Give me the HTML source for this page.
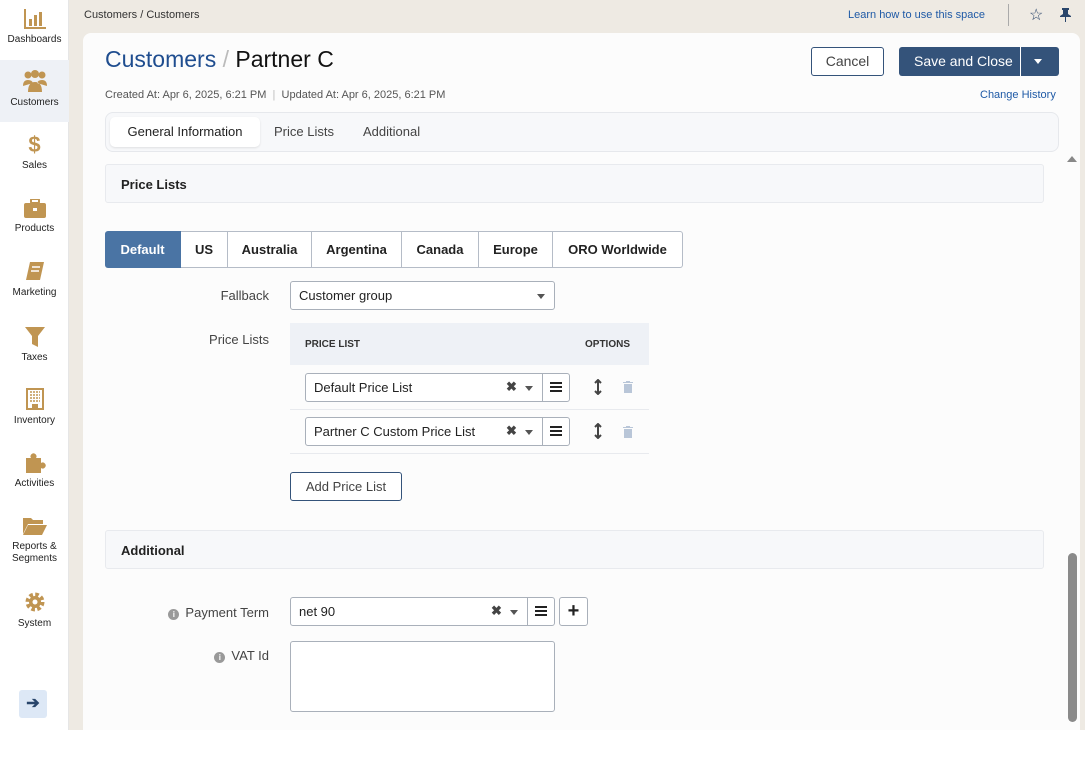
<!DOCTYPE html>
<html><head><meta charset="utf-8"><style>
*{box-sizing:border-box;margin:0;padding:0}
body{width:1085px;height:780px;background:#fff;font-family:"Liberation Sans",sans-serif;color:#222;position:relative;overflow:hidden;font-size:13px}
.side{position:absolute;left:0;top:0;width:69px;height:730px;background:#fff;border-right:1px solid #e6e6e6}
.nav{position:absolute;left:0;width:69px;text-align:center;font-size:10px;color:#222}
.nav svg{display:block;margin:0 auto 5px}
.top{position:absolute;left:69px;top:0;width:1016px;height:730px;background:#eeeae3}
.card{position:absolute;left:83px;top:33px;width:997px;height:697px;background:#fcfcfc;border-radius:8px 8px 0 0}
a{color:#1f5aa6}
.abs{position:absolute}
.sec{position:absolute;left:105px;width:939px;height:39px;background:#f7f8fa;border:1px solid #e8eaee;border-radius:3px;font-weight:bold;font-size:13px;padding:12px 15px}
.tab{position:absolute;top:231px;height:37px;border:1px solid #b5bcc7;border-left:none;font-weight:bold;font-size:13px;text-align:center;line-height:35px;background:#fff}
.inp{position:absolute;background:#fff;border:1px solid #a9b0ba;border-radius:3px;font-size:13px}
.lbl{position:absolute;font-size:13px;color:#444;text-align:right}
.hb{position:absolute;left:244px;top:8px;width:12px;height:2px;background:#222;box-shadow:0 4px 0 #222,0 8px 0 #222}
</style></head><body>
<div class="top"></div>
<div class="side">
 <div class="nav" style="top:9px"><svg width="22" height="20" viewBox="0 0 22 20"><path d="M1 0v19h21" stroke="#c09552" stroke-width="2" fill="none"/><rect x="5" y="10" width="3" height="7" fill="#c09552"/><rect x="10" y="6" width="3" height="11" fill="#c09552"/><rect x="15" y="3" width="3" height="14" fill="#c09552"/></svg>Dashboards</div>
 <div style="position:absolute;top:60px;left:0;width:69px;height:62px;background:#eef1f6"></div>
 <div class="nav" style="top:70px"><svg width="26" height="22" viewBox="0 0 26 22"><circle cx="6" cy="5" r="3.5" fill="#c09552"/><circle cx="20" cy="5" r="3.5" fill="#c09552"/><circle cx="13" cy="4" r="4" fill="#c09552"/><path d="M1 16q0-6 5-6 4 0 5 3M25 16q0-6-5-6-4 0-5 3M6 22q0-10 7-10t7 10z" fill="#c09552"/></svg>Customers</div>
 <div class="nav" style="top:134px"><div style="color:#c09552;font-size:22px;font-weight:bold;height:26px;line-height:22px">$</div>Sales</div>
 <div class="nav" style="top:199px"><svg width="22" height="19" viewBox="0 0 22 19"><rect x="7" y="0" width="8" height="4" rx="1" fill="none" stroke="#c09552" stroke-width="2"/><rect x="0" y="4" width="22" height="15" rx="2" fill="#c09552"/><rect x="9" y="9" width="4" height="3" fill="#fff"/></svg>Products</div>
 <div class="nav" style="top:262px"><svg width="20" height="20" viewBox="0 0 20 20"><path d="M5 0h14l-4 18H1z" fill="#c09552"/><path d="M7 5h8M6 9h8" stroke="#fff" stroke-width="1.5"/></svg>Marketing</div>
 <div class="nav" style="top:327px"><svg width="20" height="20" viewBox="0 0 20 20"><path d="M0 0h20l-7 9v11l-6-3V9z" fill="#c09552"/></svg>Taxes</div>
 <div class="nav" style="top:388px"><svg width="18" height="22" viewBox="0 0 18 22"><rect x="0" y="0" width="18" height="22" fill="#c09552"/><rect x="2" y="2" width="14" height="18" fill="#fff"/><path d="M4 4h10M4 7h10M4 10h10M4 13h10" stroke="#c09552" stroke-width="1.5" stroke-dasharray="2 1"/><rect x="6" y="16" width="6" height="4" fill="#c09552"/></svg>Inventory</div>
 <div class="nav" style="top:451px"><svg width="22" height="22" viewBox="0 0 22 22"><path d="M2 7h5a3 3 0 1 1 5 0h5v5a3 3 0 1 1 0 5v5H2z" fill="#c09552"/></svg>Activities</div>
 <div class="nav" style="top:516px;line-height:12px"><svg width="24" height="20" viewBox="0 0 24 20"><path d="M0 2h8l2 2h10v4H5L0 18z" fill="#c09552"/><path d="M5 9h19l-5 10H0z" fill="#c09552"/></svg>Reports &amp;<br>Segments</div>
 <div class="nav" style="top:591px"><svg width="22" height="22" viewBox="0 0 22 22"><circle cx="11" cy="11" r="7" fill="none" stroke="#c09552" stroke-width="5" stroke-dasharray="3.3 2.2"/><circle cx="11" cy="11" r="6" fill="#c09552"/><circle cx="11" cy="11" r="2.5" fill="#fff"/></svg>System</div>
 <div style="position:absolute;left:19px;top:690px;width:28px;height:28px;background:#dde8f6;border-radius:3px;text-align:center;line-height:27px;color:#29456b;font-weight:bold;font-size:16px">➔</div>
</div>
<div class="abs" style="left:84px;top:9px;font-size:11px;color:#333">Customers / Customers</div>
<div class="abs" style="left:848px;top:9px;font-size:11px"><a>Learn how to use this space</a></div>
<div class="abs" style="left:1008px;top:4px;width:1px;height:22px;background:#aaa"></div>
<div class="abs" style="left:1029px;top:5px;font-size:16px;color:#29456b">☆</div>
<svg class="abs" style="left:1060px;top:8px" width="11" height="14" viewBox="0 0 11 14"><path d="M2 0h7v2H8v4l3 2v1H0V8l3-2V2H2zM5 9h1v5H5z" fill="#29456b"/></svg>
<div class="card"></div>
<div class="abs" style="left:105px;top:46px;font-size:23px;color:#1f4d8f">Customers <span style="color:#bbb">/</span> <span style="color:#111">Partner C</span></div>
<div class="abs" style="left:105px;top:89px;font-size:11px;color:#555">Created At: Apr 6, 2025, 6:21 PM <span style="color:#bbb">&nbsp;|&nbsp;</span> Updated At: Apr 6, 2025, 6:21 PM</div>
<div class="abs" style="left:811px;top:47px;width:73px;height:29px;border:1px solid #34537a;border-radius:3px;background:#fff;text-align:center;line-height:27px;font-size:14px;color:#444">Cancel</div>
<div class="abs" style="left:899px;top:47px;width:160px;height:29px;background:#34537a;border-radius:3px;color:#fff;font-size:14px;line-height:29px;padding-left:15px">Save and Close<span style="position:absolute;left:121px;top:0;width:1px;height:29px;background:#fff"></span><span style="position:absolute;left:135px;top:12px;border:4px solid transparent;border-top:5px solid #fff"></span></div>
<div class="abs" style="left:980px;top:89px;font-size:11px;color:#1f5aa6">Change History</div>
<div class="abs" style="left:105px;top:112px;width:954px;height:40px;background:#f7f8fa;border:1px solid #e6e8ec;border-radius:8px"></div>
<div class="abs" style="left:110px;top:117px;width:150px;height:30px;background:#fff;border-radius:5px;box-shadow:0 1px 2px rgba(0,0,0,.1);font-size:13px;line-height:29px;text-align:center;color:#222">General Information</div>
<div class="abs" style="left:274px;top:124px;font-size:13px;color:#444">Price Lists</div>
<div class="abs" style="left:363px;top:124px;font-size:13px;color:#444">Additional</div>
<div class="abs" style="left:1067px;top:156px;border:5px solid transparent;border-bottom:6px solid #888;border-top:none"></div>
<div class="sec" style="top:164px">Price Lists</div>
<div class="tab" style="left:105px;width:76px;background:#4a74a4;color:#fff;border-color:#4a74a4;border-radius:3px 0 0 3px">Default</div>
<div class="tab" style="left:181px;width:47px">US</div>
<div class="tab" style="left:228px;width:84px">Australia</div>
<div class="tab" style="left:312px;width:90px">Argentina</div>
<div class="tab" style="left:402px;width:77px">Canada</div>
<div class="tab" style="left:479px;width:74px">Europe</div>
<div class="tab" style="left:553px;width:130px;border-radius:0 3px 3px 0">ORO Worldwide</div>
<div class="lbl" style="left:200px;width:69px;top:288px">Fallback</div>
<div class="inp" style="left:290px;top:281px;width:265px;height:29px;padding:6px 8px">Customer group<span style="position:absolute;right:9px;top:12px;border:4px solid transparent;border-top:5px solid #555"></span></div>
<div class="lbl" style="left:180px;width:89px;top:332px">Price Lists</div>
<div class="abs" style="left:290px;top:323px;width:359px;height:42px;background:#eef1f6;font-size:10px;font-weight:bold;color:#333"><span class="abs" style="left:15px;top:16px">PRICE LIST</span><span class="abs" style="left:295px;top:16px">OPTIONS</span></div>
<div class="abs" style="left:290px;top:409px;width:359px;height:1px;background:#e8eaee"></div>
<div class="abs" style="left:290px;top:453px;width:359px;height:1px;background:#e8eaee"></div>
<div class="inp" style="left:305px;top:373px;width:265px;height:29px;padding:6px 8px">Default Price List<span class="abs" style="left:200px;top:5px;font-weight:bold;color:#444">✖</span><span class="abs" style="left:219px;top:12px;border:4px solid transparent;border-top:5px solid #555"></span><span class="abs" style="left:236px;top:0;width:1px;height:27px;background:#a9b0ba"></span><span class="hb"></span></div>
<div class="inp" style="left:305px;top:417px;width:265px;height:29px;padding:6px 8px">Partner C Custom Price List<span class="abs" style="left:200px;top:5px;font-weight:bold;color:#444">✖</span><span class="abs" style="left:219px;top:12px;border:4px solid transparent;border-top:5px solid #555"></span><span class="abs" style="left:236px;top:0;width:1px;height:27px;background:#a9b0ba"></span><span class="hb"></span></div>
<svg class="abs" style="left:594px;top:379px" width="8" height="16" viewBox="0 0 8 16"><path d="M4 1v14M1 4l3-3 3 3M1 12l3 3 3-3" stroke="#444" stroke-width="2" fill="none"/></svg>
<svg class="abs" style="left:594px;top:423px" width="8" height="16" viewBox="0 0 8 16"><path d="M4 1v14M1 4l3-3 3 3M1 12l3 3 3-3" stroke="#444" stroke-width="2" fill="none"/></svg>
<svg class="abs" style="left:623px;top:381px" width="10" height="12" viewBox="0 0 10 12"><path d="M0 1h10v1H0zM3 0h4v1H3zM1 3h8v9H1z" fill="#b9c6d8"/></svg>
<svg class="abs" style="left:623px;top:426px" width="10" height="12" viewBox="0 0 10 12"><path d="M0 1h10v1H0zM3 0h4v1H3zM1 3h8v9H1z" fill="#b9c6d8"/></svg>
<div class="abs" style="left:290px;top:472px;width:112px;height:29px;border:1px solid #34537a;border-radius:3px;background:#fff;font-size:13px;line-height:27px;text-align:center;color:#444">Add Price List</div>
<div class="sec" style="top:530px">Additional</div>
<div class="lbl" style="left:150px;width:119px;top:605px"><span style="display:inline-block;width:11px;height:11px;border-radius:50%;background:#999;color:#fff;font-size:8px;line-height:11px;text-align:center;font-weight:bold;margin-right:6px">i</span>Payment Term</div>
<div class="inp" style="left:290px;top:597px;width:265px;height:29px;padding:6px 8px">net 90<span class="abs" style="left:200px;top:5px;font-weight:bold;color:#444">✖</span><span class="abs" style="left:219px;top:12px;border:4px solid transparent;border-top:5px solid #555"></span><span class="abs" style="left:236px;top:0;width:1px;height:27px;background:#a9b0ba"></span><span class="hb"></span></div>
<div class="inp" style="left:559px;top:597px;width:29px;height:29px;text-align:center;font-size:20px;font-weight:bold;line-height:26px">+</div>
<div class="lbl" style="left:180px;width:89px;top:648px"><span style="display:inline-block;width:11px;height:11px;border-radius:50%;background:#999;color:#fff;font-size:8px;line-height:11px;text-align:center;font-weight:bold;margin-right:6px">i</span>VAT Id</div>
<div class="inp" style="left:290px;top:641px;width:265px;height:71px"></div>
<div class="abs" style="left:1068px;top:553px;width:9px;height:169px;background:#8a8a8a;border-radius:5px"></div>
</body></html>
